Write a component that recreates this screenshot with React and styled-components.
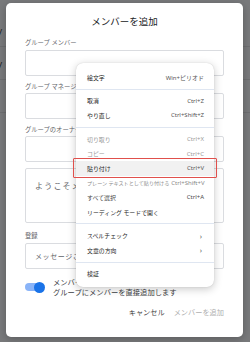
import React from 'react'
import styled, { createGlobalStyle } from 'styled-components'

const GlobalStyle = createGlobalStyle`
  html, body {
    margin: 0;
    padding: 0;
  }
  body {
    font-family: "Noto Sans", "Noto Sans CJK JP", sans-serif;
  }
`

const Page = styled.div`
  position: relative;
  width: 250px;
  height: 342px;
  overflow: hidden;
  background: #fff;
`

const BackList = styled.div`
  display: flex;
  flex-direction: column;
  padding-top: 14px;
`

const BackRow = styled.div`
  height: 32px;
  display: flex;
  align-items: center;
  margin-left: -22px;
  border-bottom: 1px solid #e3e3e3;
  font-size: 9px;
  color: #222;
`

const Overlay = styled.div`
  position: absolute;
  inset: 0;
  background: rgba(32, 33, 36, 0.6);
  padding: 3px 0 0 6px;
`

const Dialog = styled.div`
  width: 237px;
  height: 334px;
  box-sizing: border-box;
  background: #fff;
  border-radius: 5px;
  padding: 13px 19px 0;
  display: flex;
  flex-direction: column;
  box-shadow: 0 2px 8px rgba(0, 0, 0, 0.25);
`

const Title = styled.h2`
  margin: 0;
  font-size: 9.5px;
  line-height: 12px;
  font-weight: 400;
  text-align: center;
  color: #202124;
`

const Label = styled.div`
  margin: ${({ $top }) => $top ?? 7}px 0 ${({ $bottom }) => $bottom ?? 2}px;
  font-size: 6.3px;
  line-height: 8px;
  color: #5f6368;
`

const Field = styled.div`
  height: ${({ $h }) => $h || 26}px;
  margin-top: ${({ $top }) => $top || 0}px;
  box-sizing: border-box;
  border: 1px solid #dadce0;
  border-radius: 2px;
  padding: ${({ $pad }) => $pad || '0 9px'};
  display: flex;
  align-items: ${({ $align }) => $align || 'center'};
  font-size: ${({ $fs }) => $fs || 7}px;
  letter-spacing: ${({ $ls }) => $ls || 0}px;
  color: #5f6368;
  white-space: nowrap;
  overflow: hidden;
`

const ToggleRow = styled.div`
  margin-top: 8px;
  display: flex;
  align-items: center;
  gap: 8px;
`

const Toggle = styled.div`
  position: relative;
  width: 20px;
  height: 11px;
  flex: none;
  &::before {
    content: '';
    position: absolute;
    left: 0;
    top: 1.5px;
    width: 17px;
    height: 8px;
    border-radius: 4px;
    background: #8ab4f8;
  }
  &::after {
    content: '';
    position: absolute;
    right: 0;
    top: 0;
    width: 11px;
    height: 11px;
    border-radius: 50%;
    background: #1a73e8;
  }
`

const ToggleText = styled.div`
  font-size: 7.3px;
  line-height: 10px;
  color: #3c4043;
  white-space: nowrap;
`

const Actions = styled.div`
  margin-top: 10px;
  display: flex;
  justify-content: flex-end;
  gap: 9px;
`

const ActionButton = styled.span`
  font-size: 7.2px;
  line-height: 10px;
  color: ${({ $disabled }) => ($disabled ? '#b0b0b0' : '#444')};
`

const Menu = styled.div`
  position: absolute;
  left: 76px;
  top: 63px;
  width: 138px;
  box-sizing: border-box;
  padding: 7px 0 6px;
  background: #fff;
  border-radius: 7px;
  box-shadow: 0 2px 9px rgba(0, 0, 0, 0.22), 0 0 1px rgba(0, 0, 0, 0.2);
`

const Item = styled.div`
  position: relative;
  height: 14.6px;
  padding: 0 10px 0 11px;
  display: flex;
  align-items: center;
  justify-content: space-between;
  gap: 2px;
  font-size: 5.9px;
  white-space: nowrap;
  color: ${({ $tone }) => $tone || '#262626'};
  background: ${({ $active }) => ($active ? '#f1f1f1' : 'transparent')};
  ${({ $active }) =>
    $active &&
    `
    &::after {
      content: '';
      position: absolute;
      inset: -3px -3px -2px -3px;
      border: 1.5px solid #e0504c;
      border-radius: 1px;
    }
  `}
`

const ItemLabel = styled.span`
  font-size: ${({ $fs }) => ($fs ? `${$fs}px` : 'inherit')};
`

const Shortcut = styled.span`
  font-size: 6px;
  color: ${({ $tone }) => $tone || '#555'};
`

const Chevron = styled.span`
  font-size: 7.5px;
  color: #555;
  margin-right: 2px;
`

const Separator = styled.div`
  height: 9px;
  display: flex;
  align-items: center;
  &::before {
    content: '';
    flex: 1;
    height: 1px;
    background: #dfe6f1;
  }
`

const MENU = [
  { label: '絵文字', key: 'Win+ピリオド' },
  'sep',
  { label: '取消', key: 'Ctrl+Z' },
  { label: 'やり直し', key: 'Ctrl+Shift+Z' },
  'sep',
  { label: '切り取り', key: 'Ctrl+X', tone: '#9a9a9a' },
  { label: 'コピー', key: 'Ctrl+C', tone: '#9a9a9a' },
  { label: '貼り付け', key: 'Ctrl+V', active: true },
  { label: 'プレーン テキストとして貼り付ける', key: 'Ctrl+Shift+V', tone: '#8a8a8a', fs: 5.1 },
  { label: 'すべて選択', key: 'Ctrl+A', tone: '#4a4a4a' },
  { label: 'リーディング モードで開く' },
  'sep',
  { label: 'スペルチェック', sub: true },
  { label: '文章の方向', sub: true },
  'sep',
  { label: '検証' },
]

const ContextMenu = () => (
  <Menu>
    {MENU.map((m, i) =>
      m === 'sep' ? (
        <Separator key={i} />
      ) : (
        <Item key={i} $tone={m.tone} $active={m.active}>
          <ItemLabel $fs={m.fs}>{m.label}</ItemLabel>
          {m.key && <Shortcut $tone={m.tone}>{m.key}</Shortcut>}
          {m.sub && <Chevron>›</Chevron>}
        </Item>
      )
    )}
  </Menu>
)

const App = () => (
  <Page>
    <GlobalStyle />
    <BackList>
      <BackRow>Entity</BackRow>
      <BackRow>Entity</BackRow>
      <BackRow>v1.8</BackRow>
    </BackList>
    <Overlay>
      <Dialog>
        <Title>メンバーを追加</Title>
        <Label $top={11} $bottom={3}>グループ メンバー</Label>
        <Field />
        <Label>グループ マネージャー</Label>
        <Field />
        <Label>グループのオーナー</Label>
        <Field />
        <Field $top={6} $h={55} $align="flex-start" $pad="11px 9px 0" $fs={8} $ls={1.2}>
          ようこそメッセージ
        </Field>
        <Label $top={9} $bottom={3}>登録</Label>
        <Field $ls={0.6}>メッセージこちら</Field>
        <ToggleRow>
          <Toggle />
          <ToggleText>
            メンバーを直接追加
            <br />
            グループにメンバーを直接追加します
          </ToggleText>
        </ToggleRow>
        <Actions>
          <ActionButton>キャンセル</ActionButton>
          <ActionButton $disabled>メンバーを追加</ActionButton>
        </Actions>
      </Dialog>
    </Overlay>
    <ContextMenu />
  </Page>
)

export default App
